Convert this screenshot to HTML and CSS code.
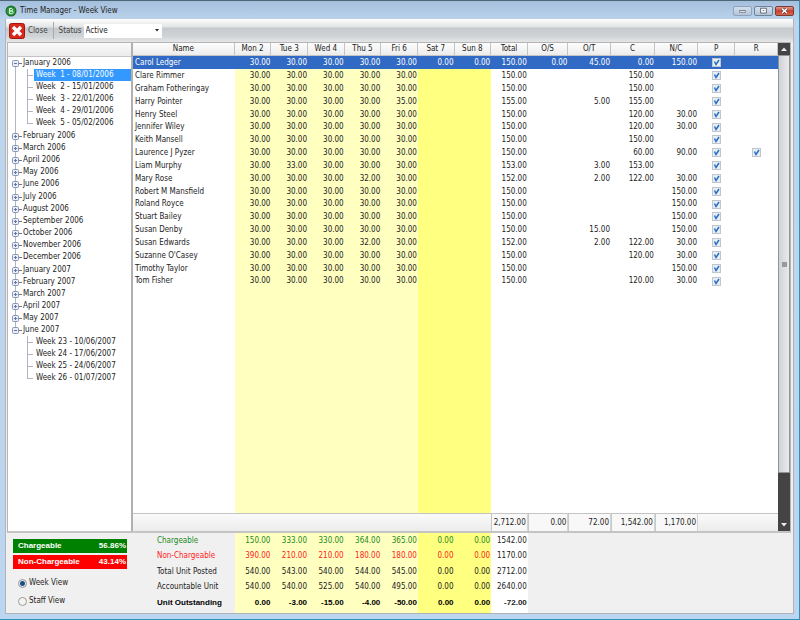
FILE: index.html
```
<!DOCTYPE html>
<html lang="en">
	<head>
		<meta charset="utf-8">
		<title>Time Manager - Week View</title>
		<link rel="stylesheet" href="styles.css">
	</head>
	<body>
		<div class="window">
			<header class="titlebar">
				<svg class="app_icon" viewBox="0 0 12 12"><circle cx="6" cy="6" r="5.5" fill="#1d6b2a"/><circle cx="6" cy="6" r="4.3" fill="#2f9a3c"/><path d="M4.500 3.500h2a1.300 1.300 0 0 1 0 2.500h-2zM4.500 6h2.300a1.300 1.300 0 0 1 0 2.600H4.500z" fill="none" stroke="#dff5df" stroke-width="1"/></svg>
				<h1>Time Manager - Week View</h1>
				<button class="win_btn" type="button" aria-label="Minimize"><svg viewBox="0 0 18 10"><rect x="5.5" y="4.5" width="7" height="2" fill="#fff" stroke="#666c78"/></svg></button>
				<button class="win_btn win_btn_max" type="button" aria-label="Maximize"><svg viewBox="0 0 18 10"><rect x="5.5" y="1.5" width="7" height="6" fill="#fff" stroke="#4a5261"/><rect x="8" y="4" width="2" height="1" fill="#4a5261"/></svg></button>
				<button class="win_btn win_btn_close" type="button" aria-label="Close window"><svg viewBox="0 0 18 10"><path d="M6 2l6 5.500M12 2l-6 5.500" stroke="#5a3030" stroke-width="3.400"/><path d="M6 2l6 5.500M12 2l-6 5.500" stroke="#fff" stroke-width="2"/></svg></button>
			</header>
			<div class="client">
				<div class="toolbar">
					<button class="close_btn" type="button">
						<svg viewBox="0 0 16 16"><rect x=".5" y=".5" width="15" height="15" rx="2" fill="#d8281c" stroke="#a31410"/><path d="M4 4l8 8M12 4l-8 8" stroke="#fff" stroke-width="3.400"/></svg>
						Close
					</button>
					<label for="status">Status</label>
					<select id="status">
						<option>Active</option>
						<option>Inactive</option>
					</select>
				</div>
				<main class="panels">
					<nav class="weeks">
						<div class="weeks_head"></div>
						<ul class="tree" id="tree"></ul>
					</nav>
					<section class="sheet">
						<table class="grid">
							<colgroup>
								<col><col class="day" span="8"><col class="os"><col class="ot"><col class="c"><col class="nc"><col class="p"><col class="r">
							</colgroup>
							<thead>
								<tr><th>Name</th><th>Mon 2</th><th>Tue 3</th><th>Wed 4</th><th>Thu 5</th><th>Fri 6</th><th>Sat 7</th><th>Sun 8</th><th>Total</th><th>O/S</th><th>O/T</th><th>C</th><th>N/C</th><th>P</th><th>R</th></tr>
							</thead>
							<tbody id="staff"></tbody>
							<tfoot>
								<tr><td colspan="8"></td><td class="sum">2,712.00</td><td class="sum">0.00</td><td class="sum">72.00</td><td class="sum">1,542.00</td><td class="sum">1,170.00</td><td colspan="2"></td></tr>
							</tfoot>
						</table>
						<div class="scroll">
							<button type="button" aria-label="Scroll up"><svg viewBox="0 0 6 4"><path d="M0 4l3-3.500 3 3.500z" fill="#eee"/></svg></button>
							<div class="thumb"></div>
							<button type="button" aria-label="Scroll down"><svg viewBox="0 0 6 4"><path d="M0 0l3 3.500 3-3.500z" fill="#eee"/></svg></button>
						</div>
					</section>
				</main>
				<footer class="bottom">
					<form class="modes">
						<p class="ratio ratio_yes"><span>Chargeable</span><span>56.86%</span></p>
						<p class="ratio ratio_no"><span>Non-Chargeable</span><span>43.14%</span></p>
						<label><input type="radio" name="view" checked> Week View</label>
						<label><input type="radio" name="view"> Staff View</label>
					</form>
					<table class="grid summary">
						<colgroup>
							<col><col class="day" span="8"><col class="os"><col class="ot"><col class="c"><col class="nc"><col class="p"><col class="r">
						</colgroup>
						<tbody id="summary"></tbody>
					</table>
				</footer>
			</div>
		</div>
		<script src="script.js"></script>
	</body>
</html>
```
FILE: styles.css
```
* {
    box-sizing: border-box;
}
body {
    margin: 0;
    font-family: "DejaVu Sans Condensed", "DejaVu Sans", sans-serif;
    font-size: 8px;
    line-height: 12px;
    color: #222;
}
button, select, input {
    margin: 0;
    font: inherit;
    color: inherit;
}
ul, p, h1 {
    margin: 0;
    padding: 0;
}
.window {
    display: flex;
    flex-direction: column;
    height: 100vh;
    padding: 0 5px 5px 5px;
    background: linear-gradient(#a4bfdd, #bdd4ec 20px, #bcd5f0);
    border-top: 1px solid #4c6674;
    border-right: 1px solid #2b93b5;
    border-bottom: 1px solid #2b93b5;
}

/* title bar */
.titlebar {
    display: flex;
    align-items: center;
    gap: 2px;
    height: 18px;
    padding-top: 2px;
    flex: none;
}
.titlebar h1 {
    flex: 1;
    padding-left: 1px;
    font-size: 8px;
    font-weight: normal;
}
.app_icon {
    width: 12px;
    height: 12px;
}
.win_btn {
    width: 19px;
    height: 10px;
    padding: 0;
    border: 1px solid #8ea3ba;
    border-radius: 2px;
    background: linear-gradient(#d3dfed, #b3c4d8);
}
.win_btn svg {
    display: block;
    width: 100%;
    height: 100%;
}
.win_btn_max {
    border-color: #6f8399;
}
.win_btn_close {
    border-color: #7b3a36;
    background: linear-gradient(#e39a8b, #c5402c 50%, #d66a50);
}

/* toolbar */
.client {
    display: flex;
    flex-direction: column;
    flex: 1;
    min-height: 0;
    border: 1px solid #b0b4b8;
    border-top: 0;
    background: #f0f0f0;
}
.toolbar {
    display: flex;
    align-items: center;
    height: 23px;
    flex: none;
    padding-left: 3px;
    background: linear-gradient(#fdfdfd, #e2e4e6 8px, #c5c9cd 9px, #d0d3d6 17px, #e4e6e7);
    color: #444;
}
.close_btn {
    display: flex;
    align-items: center;
    gap: 3px;
    height: 17px;
    padding: 0 5px 0 0;
    border: 0;
    border-right: 1px solid #aaa;
    background: none;
}
.close_btn svg {
    width: 16px;
    height: 16px;
}
.toolbar label {
    padding: 0 2px 0 5px;
}
.toolbar select {
    width: 78px;
    height: 14px;
    padding: 0 2px;
    border: 0;
    appearance: none;
    background: #fff url("data:image/svg+xml,%3Csvg xmlns='http://www.w3.org/2000/svg' width='4' height='3'%3E%3Cpath d='M0 0h4l-2 2.500z' fill='%23222'/%3E%3C/svg%3E") no-repeat right 3px center;
    color: #222;
}

/* week tree */
.panels {
    display: flex;
    flex: 1;
    min-height: 0;
    margin: 0 2px 0 1px;
    border: 1px solid #b4b4b4;
    border-bottom: 2px solid #c4c4c4;
    background: #fff;
}
.weeks {
    width: 125px;
    flex: none;
    border-right: 2px solid #b0b0b0;
}
.weeks_head {
    height: 14px;
    border-bottom: 1px solid #c4c4c4;
    background: linear-gradient(#fafafa, #ececec);
}
.tree {
    list-style: none;
}
.tree li {
    position: relative;
    padding-left: 15px;
}
.tree > li:nth-child(6n) {
    padding-bottom: 1px;
}
.tree li::before {
    content: "";
    position: absolute;
    left: 7px;
    top: 0;
    bottom: 0;
    border-left: 1px solid #b0b6c4;
}
.tree > li:first-child::before {
    top: 6px;
}
.tree > li:last-child::before {
    bottom: auto;
    height: 6px;
}
.tree .toggle {
    position: absolute;
    left: 4px;
    top: 3px;
    width: 10px;
    height: 7px;
    padding: 0;
    border: 0;
    background: none;
}
.toggle svg {
    display: block;
    width: 10px;
    height: 7px;
}
.tree ul {
    list-style: none;
    padding-bottom: 1px;
}
.tree ul li {
    padding-left: 13px;
}
.tree ul li::before {
    left: 4px;
}
.tree ul li:last-child::before {
    bottom: 6px;
}
.tree ul li::after {
    content: "";
    position: absolute;
    left: 4px;
    top: 6px;
    width: 6px;
    border-top: 1px solid #b0b6c4;
}
.tree ul a {
    display: block;
    margin-left: -2px;
    padding-left: 2px;
    color: inherit;
    text-decoration: none;
    white-space: pre;
}
.tree ul a.current {
    background: #3399ff;
    color: #fff;
}

/* time sheet */
.sheet {
    display: flex;
    flex: 1;
    min-width: 0;
}
.grid {
    flex: 1;
    min-width: 0;
    border-collapse: separate;
    border-spacing: 0;
    table-layout: fixed;
    width: 100%;
}
.day {
    width: 5.68%;
}
.os {
    width: 6.3%;
}
.ot {
    width: 6.6%;
}
.c {
    width: 6.8%;
}
.nc {
    width: 6.7%;
}
.p {
    width: 5.8%;
}
.r {
    width: 6.6%;
}
.grid th, .grid td {
    height: 13px;
    padding: 0 1px 0 0;
    text-align: right;
    white-space: nowrap;
}
.grid thead th {
    padding: 0;
    border-right: 1px solid #c4c4c4;
    border-bottom: 1px solid #c4c4c4;
    background: linear-gradient(#fdfdfd, #ececec);
    font-weight: normal;
    text-align: center;
}
.sheet tbody tr:nth-child(6n) td {
    height: 12px;
}
.grid tbody td:first-child {
    padding-left: 2px;
    text-align: left;
}
.grid tbody td:nth-child(n+2):nth-child(-n+6) {
    background: #ffffc0;
}
.grid tbody td:nth-child(7), .grid tbody td:nth-child(8) {
    background: #ffff80;
}
.sheet .grid tbody tr.selected td:nth-child(n) {
    background: #316ac5;
    color: #fff;
}
.sheet tbody td:nth-child(14), .sheet tbody td:nth-child(15) {
    padding: 0;
    text-align: center;
}
.grid tbody tr.filler td {
    height: auto;
}
.grid tfoot td {
    height: 18px;
    border-top: 1px solid #c4c4c4;
    background: linear-gradient(#fafafa, #ececec);
}
.grid tfoot .sum {
    border-left: 1px solid #c8c8c8;
    border-right: 1px solid #d4d4d4;
    background: #f8f8f8;
}
.grid input {
    display: block;
    width: 9px;
    height: 9px;
    margin: 0 auto;
    appearance: none;
    border: 1px solid #c0c6ce;
    background: #e6edf5;
}
.grid input:checked {
    background: #e6edf5 url("data:image/svg+xml,%3Csvg xmlns='http://www.w3.org/2000/svg' viewBox='0 0 7 7'%3E%3Cpath d='M1.500 2.500l1.500 3 3-4.500' fill='none' stroke='%232a6fc0' stroke-width='1.500'/%3E%3C/svg%3E");
}
.scroll {
    display: flex;
    flex-direction: column;
    width: 12px;
    flex: none;
    background: #444;
}
.scroll button {
    height: 12px;
    padding: 0;
    border: 0;
    background: #444;
}
.scroll svg {
    display: block;
    width: 6px;
    height: 4px;
    margin: 0 auto;
}
.thumb {
    flex: 1;
    margin-bottom: 46px;
    border: 1px solid #909498;
    background: linear-gradient(#999, #999) center / 5px 5px no-repeat, linear-gradient(90deg, #d0d3d6, #e8eaec);
}

/* bottom part */
.bottom {
    display: flex;
    flex: none;
    margin: 0 2px 0 1px;
    padding-right: 13px;
}
.modes {
    width: 126px;
    flex: none;
    padding: 6px 6px 0 6px;
}
.ratio {
    display: flex;
    justify-content: space-between;
    margin-bottom: 2px;
    padding: 1px 1px 1px 5px;
    font-family: "Liberation Sans", sans-serif;
    font-weight: bold;
    color: #fff;
}
.ratio_yes {
    background: #008000;
}
.ratio_no {
    background: #ff0000;
}
.modes label {
    display: flex;
    align-items: center;
    gap: 2px;
    padding: 6px 0 0 5px;
}
.modes input {
    width: 9px;
    height: 9px;
    appearance: none;
    border: 1px solid #999;
    border-radius: 50%;
    background: #f4f4f4;
}
.modes input:checked {
    background: radial-gradient(#1f4f80 2px, #dfe8f0 3px);
}
.summary td {
    height: 16px;
}
.summary tr:nth-child(2n+1) td {
    height: 15px;
}
.grid.summary tbody td:first-child {
    padding-left: 24px;
}
.grid.summary tbody td:nth-child(9) {
    background: #fff;
}
.summary .yes td {
    color: #1a8a1a;
}
.summary .no td {
    color: #f22;
}
.grid.summary tr td:nth-child(9) {
    color: #222;
}
.grid.summary .due td {
    height: 18px;
    padding-bottom: 2px;
    font-family: "Liberation Sans", sans-serif;
    font-weight: bold;
    color: #000;
}
```
FILE: script.js
```
var months = ["January 2006", "February 2006", "March 2006", "April 2006", "May 2006", "June 2006", "July 2006", "August 2006", "September 2006", "October 2006", "November 2006", "December 2006", "January 2007", "February 2007", "March 2007", "April 2007", "May 2007", "June 2007"];
var weeks = {
    "January 2006": ["Week  1 - 08/01/2006", "Week  2 - 15/01/2006", "Week  3 - 22/01/2006", "Week  4 - 29/01/2006", "Week  5 - 05/02/2006"],
    "June 2007": ["Week 23 - 10/06/2007", "Week 24 - 17/06/2007", "Week 25 - 24/06/2007", "Week 26 - 01/07/2007"]
};
// name, mon..sun, total, O/S, O/T, C, N/C, P, R
var staff = [
    "Carol Ledger|30|30|30|30|30|0|0|150|0|45|0|150|x|",
    "Clare Rimmer|30|30|30|30|30|||150|||150||x|",
    "Graham Fotheringay|30|30|30|30|30|||150|||150||x|",
    "Harry Pointer|30|30|30|30|35|||155||5|155||x|",
    "Henry Steel|30|30|30|30|30|||150|||120|30|x|",
    "Jennifer Wiley|30|30|30|30|30|||150|||120|30|x|",
    "Keith Mansell|30|30|30|30|30|||150|||150||x|",
    "Laurence J Pyzer|30|30|30|30|30|||150|||60|90|x|x",
    "Liam Murphy|30|33|30|30|30|||153||3|153||x|",
    "Mary Rose|30|30|30|32|30|||152||2|122|30|x|",
    "Robert M Mansfield|30|30|30|30|30|||150||||150|x|",
    "Roland Royce|30|30|30|30|30|||150||||150|x|",
    "Stuart Bailey|30|30|30|30|30|||150||||150|x|",
    "Susan Denby|30|30|30|30|30|||150||15||150|x|",
    "Susan Edwards|30|30|30|32|30|||152||2|122|30|x|",
    "Suzanne O'Casey|30|30|30|30|30|||150|||120|30|x|",
    "Timothy Taylor|30|30|30|30|30|||150||||150|x|",
    "Tom Fisher|30|30|30|30|30|||150|||120|30|x|"
];
var summary = [
    ["yes", "Chargeable|150|333|330|364|365|0|0|1542"],
    ["no", "Non-Chargeable|390|210|210|180|180|0|0|1170"],
    ["", "Total Unit Posted|540|543|540|544|545|0|0|2712"],
    ["", "Accountable Unit|540|540|525|540|495|0|0|2640"],
    ["due", "Unit Outstanding|0|-3|-15|-4|-50|0|0|-72"]
];
function Cell(v, i, name) {
    if(v == "x") return '<td><input type="checkbox" aria-label="' + (i == 13 ? "P " : "R ") + name + '" checked></td>';
    if(i > 0 && v != "") v = Number(v).toFixed(2);
    return "<td>" + v + "</td>";
}
function Row(line, cls) {
    var cells = line.split("|");
    return '<tr class="' + cls + '">' + cells.map(function (v, i) { return Cell(v, i, cells[0]); }).join("") + "</tr>";
}
function Month(name) {
    var open = weeks[name];
    var cross = open ? "" : "M3.500 2v3";
    var html = '<li><button class="toggle" type="button" aria-label="' + name + '"><svg viewBox="0 0 10 7"><rect x=".5" y=".5" width="6" height="6" rx="1" fill="#e8edf8" stroke="#8a97b4"/><path d="M2 3.500h3' + cross + 'M7 3.500h3" stroke="#6375a0" fill="none"/></svg></button>' + name;
    if(open) {
        html += "<ul>" + open.map(function (w, i) {
            return '<li><a href="#"' + (name == months[0] && i == 0 ? ' class="current"' : "") + ">" + w + "</a></li>";
        }).join("") + "</ul>";
    }
    return html + "</li>";
}
document.getElementById("tree").innerHTML = months.map(Month).join("");
document.getElementById("staff").innerHTML = staff.map(function (s, i) {
    return Row(s, i == 0 ? "selected" : "");
}).join("") + '<tr class="filler">' + "<td></td>".repeat(15) + "</tr>";
document.getElementById("summary").innerHTML = summary.map(function (s) {
    return Row(s[1] + "||||||", s[0]);
}).join("");
```
